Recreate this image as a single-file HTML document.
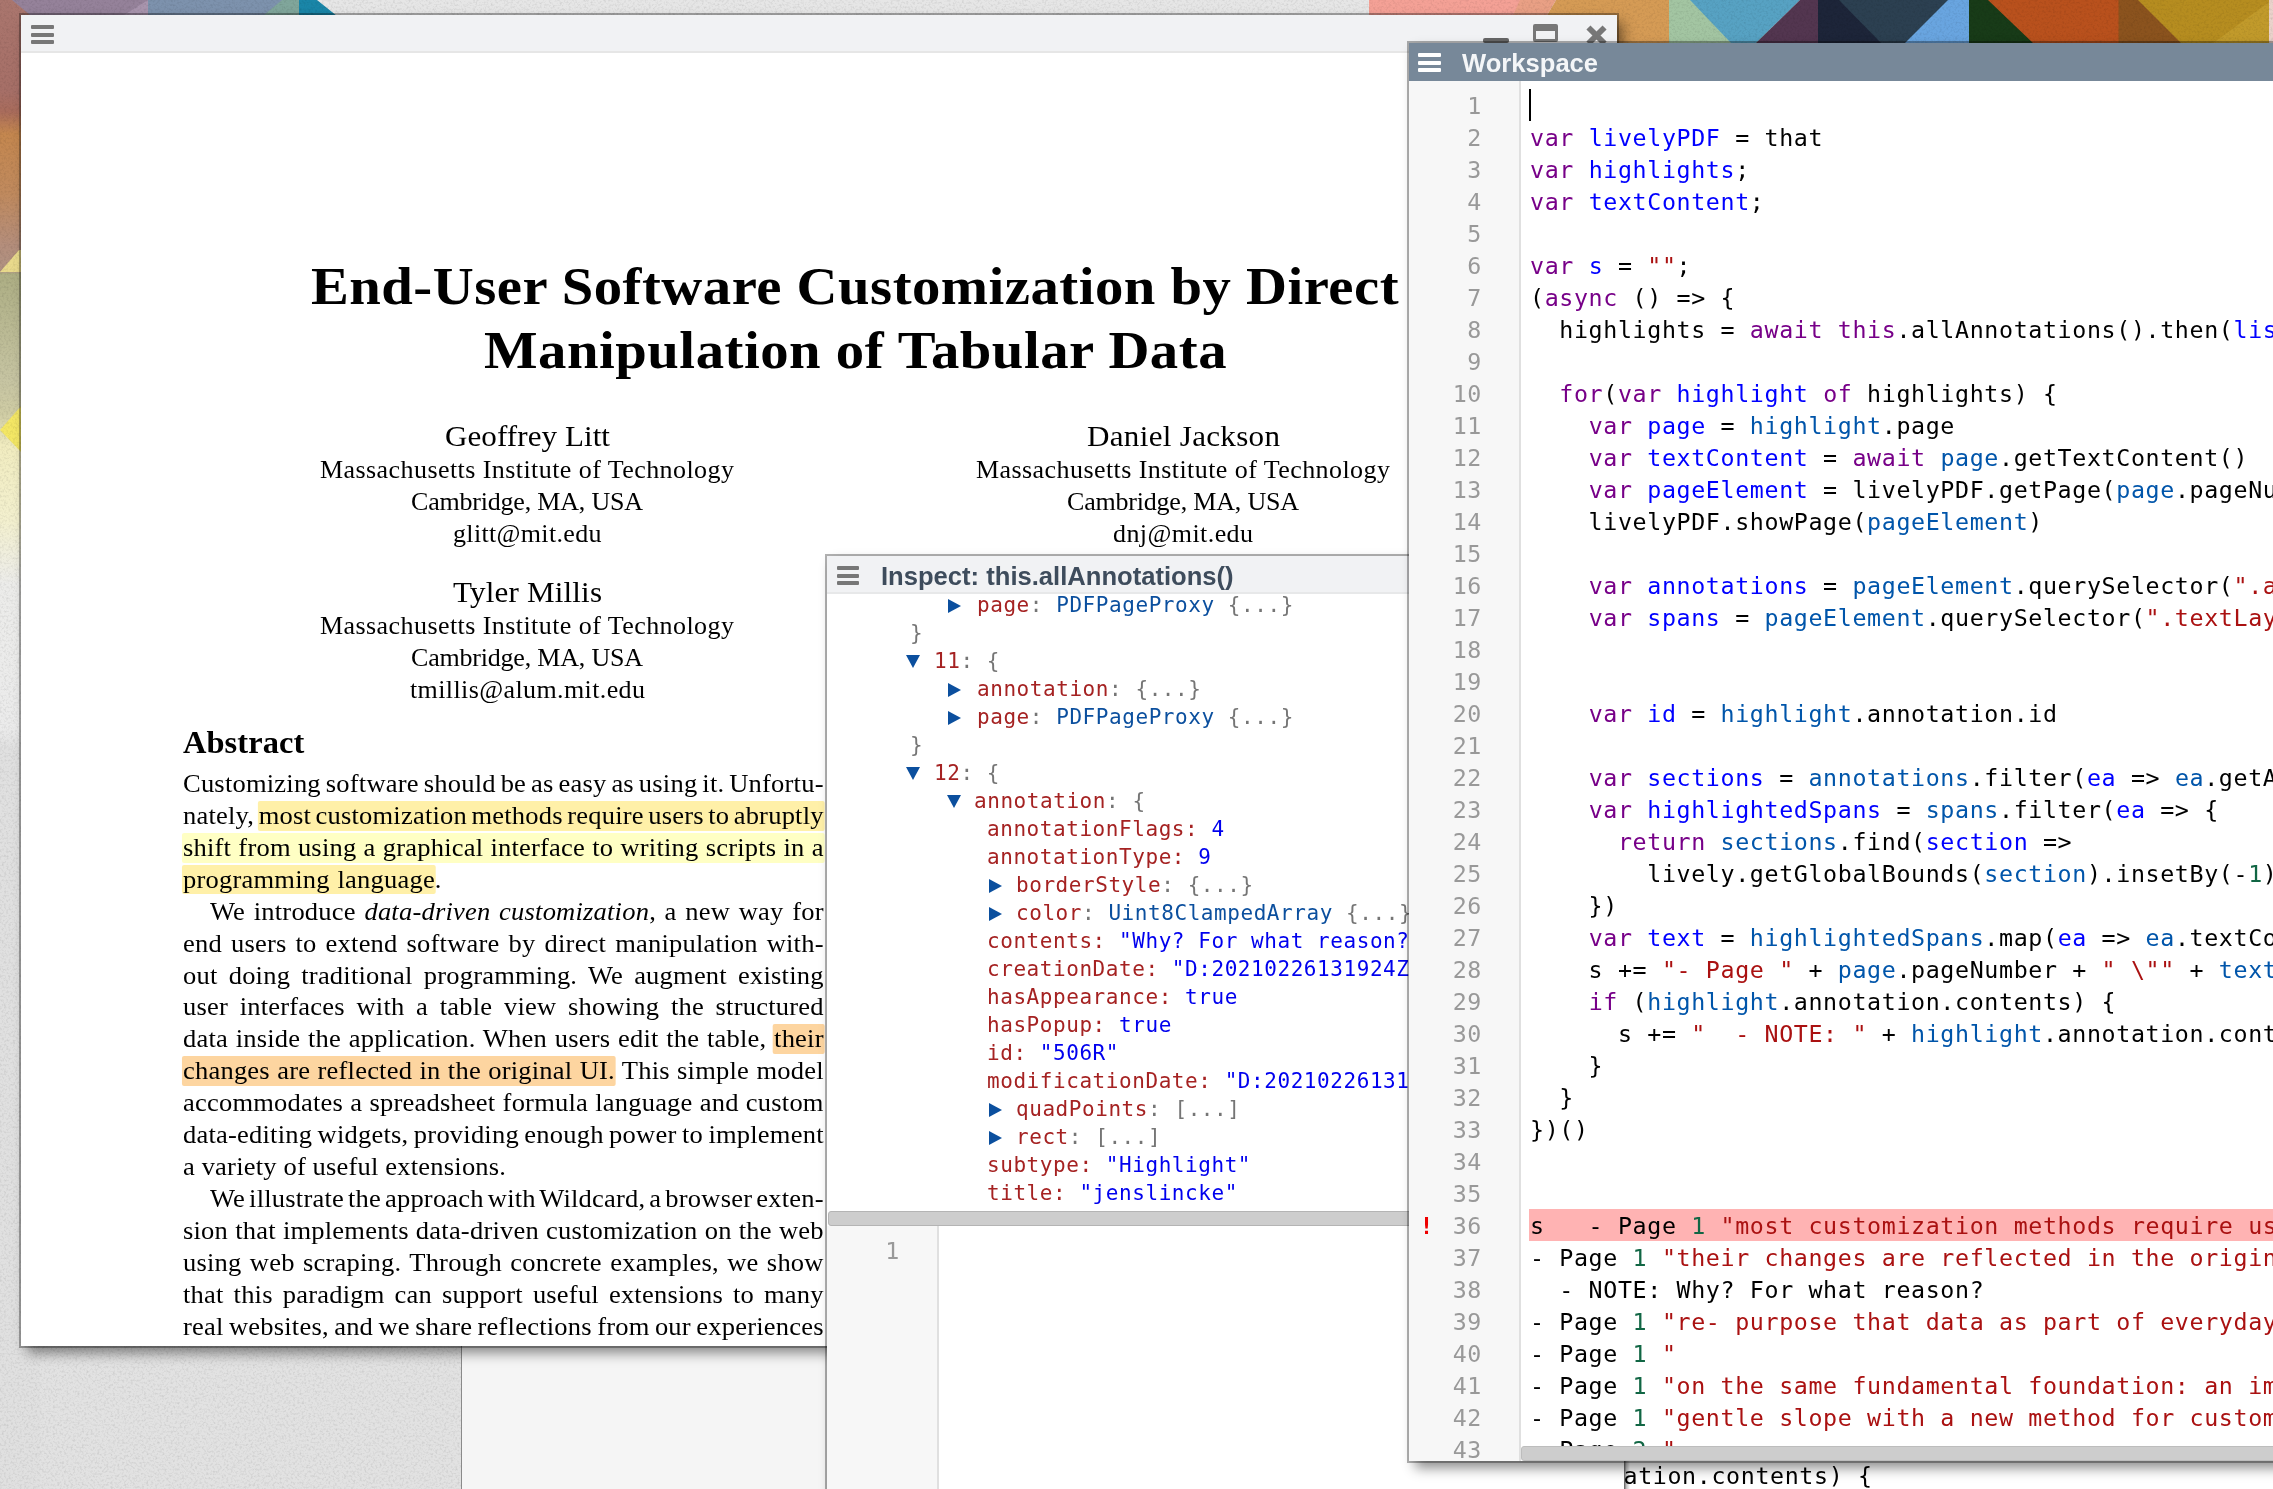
<!DOCTYPE html><html><head><meta charset="utf-8"><title>Lively PDF annotations</title><style>
html,body{margin:0;padding:0}
body{width:2273px;height:1489px;overflow:hidden;position:relative;background:#e1e1e1;font-family:"Liberation Sans",sans-serif}
#bg{position:absolute;left:0;top:0}
.win{position:absolute;overflow:hidden;background:#fff;will-change:transform;box-shadow:0 0 0 2px rgba(0,0,0,.31),6px 7px 12px 0 rgba(0,0,0,.45)}
.wrap{position:absolute}
.shadow{position:absolute;box-shadow:0 0 0 2px rgba(0,0,0,.31),6px 7px 12px 0 rgba(0,0,0,.45)}
.pdf{left:21px;top:15px;width:1596px;height:1331px}
.insp{left:827px;top:556px;width:1500px;height:960px}
.ws{left:1409px;top:43px;width:900px;height:1418px}
.tbar{position:absolute;left:0;top:0;right:0}
.tbar.light{background:#f1f2f4}
.pdf .tbar{height:36px;border-bottom:2px solid #e6e6e6}
.insp .tbar{height:35.6px;border-bottom:2px solid #e7e8e9}
.ws .tbar{height:38px;background:#778899}
.burger{position:absolute;width:23px}
.burger i{position:absolute;left:0;width:100%;height:3.7px;border-radius:1px;background:#777}
.pdf .burger{left:10px;top:10.4px;width:22.5px}
.pdf .burger i:nth-child(1){top:0}.pdf .burger i:nth-child(2){top:7.5px}.pdf .burger i:nth-child(3){top:15px}
.insp .burger{left:9.7px;top:10.2px;width:22.3px}
.insp .burger i{height:3.8px}.insp .burger i:nth-child(1){top:0}.insp .burger i:nth-child(2){top:7.8px}.insp .burger i:nth-child(3){top:15px}
.ws .burger{left:9.3px;top:10.2px;width:23.2px}
.ws .burger i{background:#fff;height:4px}
.ws .burger i:nth-child(1){top:0}.ws .burger i:nth-child(2){top:7.4px}.ws .burger i:nth-child(3){top:14.8px}
.ttl{position:absolute;font-weight:bold;white-space:nowrap}
.ttl.white{color:#f4f6f8;left:53px;top:4.5px;font-size:25.6px;line-height:30px}
.ttl.dark{color:#3e4c5c;left:54px;top:4.5px;font-size:25.6px;line-height:30px}
.wctl{position:absolute;left:0;top:0}
.wctl .min{position:absolute;left:1462px;top:23px;width:25.5px;height:5px;background:#666;border-radius:2px}
.wctl .max{position:absolute;left:1512px;top:8.7px;width:19px;height:8.1px;border:3.5px solid #777;border-top-width:7.4px;border-radius:2px}
.wctl .cls{position:absolute;left:1563.5px;top:8.5px;width:23px;height:23px}
.paper{position:absolute;left:-21px;top:-15px;width:2273px;height:1489px;font-family:"Liberation Serif",serif;color:#000}
.t{position:absolute;white-space:pre}
.bl .i{font-style:italic}
.bl .y,.bl .z,.bl .o{padding:0 1px .7px 1.1px;margin:0 -1px 0 -1.1px;border-radius:2px}
.bl .y{background:#fff0a8}.bl .z{background:#ffffc4}.bl .o{background:#fdd5a0}
.tree{position:absolute;left:-827px;top:-556px;font-family:"DejaVu Sans Mono","Liberation Mono",monospace;font-size:21px;letter-spacing:.56px}
.tr{position:absolute;left:0;height:28px;line-height:28px;white-space:pre}
.tt{position:absolute;top:0}
.ar{position:absolute;width:0;height:0}
.ar.r{top:7.5px;border-left:13px solid #0b4f9e;border-top:7.3px solid transparent;border-bottom:7.3px solid transparent}
.ar.d{top:8px;border-top:13px solid #0b4f9e;border-left:7.3px solid transparent;border-right:7.3px solid transparent}
.p{color:#a52222}.g{color:#757575}.c{color:#0b4f9e}.b{color:#0000ee}
.hsb{position:absolute;left:1px;top:654.5px;width:1600px;height:13px;background:#cdcdcd;border:1.2px solid #b4b4b4;border-radius:3px}
.ed2{position:absolute;left:0;top:669.5px;width:1600px;height:400px;background:#fff}
.gut{position:absolute;left:0;top:0;bottom:0;width:110px;background:#f7f7f7;border-right:2px solid #e0e0e0}
.ed{position:absolute;left:0;top:38px;right:0;bottom:0;background:#fff}
.ln,.cl,.bang{position:absolute;height:32px;line-height:32px;font-family:"DejaVu Sans Mono","Liberation Mono",monospace;font-size:23.3px;letter-spacing:.63px;white-space:pre}
.ln{left:0;width:73px;text-align:right;color:#999}
.cl{left:121px;color:#000}
.errbg{position:absolute;left:119.6px;top:1128px;width:900px;height:32px;background:#ffb3b3}
.bang{left:10.5px;color:#e00;font-weight:bold}
.k{color:#770088}.d{color:#0000ff}.v{color:#0055aa}.s{color:#aa1111}.n{color:#116644}
.cur{position:absolute;left:119.5px;top:8px;width:2px;height:32px;background:#000}
.hsb2{position:absolute;left:112px;top:1364.5px;width:900px;height:13px;background:#cdcdcd;border:1.2px solid #bdbdbd;border-radius:3px}
.backwin{position:absolute;left:461px;top:1300px;width:400px;height:200px;background:#f5f5f5;border-left:1.5px solid #8a8a8a}
.backcode{position:absolute;left:1623.5px;top:1459.7px;width:700px;height:32px;line-height:32px;font-family:"DejaVu Sans Mono","Liberation Mono",monospace;font-size:23.3px;letter-spacing:.63px;color:#000;white-space:pre}
.backcode .bsel{position:absolute;left:0;top:0;width:6px;height:40px;background:linear-gradient(90deg,rgba(0,0,0,.65),rgba(0,0,0,.25) 40%,rgba(0,0,0,0))}

</style></head><body>
<svg id="bg" width="2273" height="1489" viewBox="0 0 2273 1489">
<defs>
<linearGradient id="lg" x1="0" y1="0" x2="0" y2="1489" gradientUnits="userSpaceOnUse">
<stop offset="0" stop-color="#aa766e"/><stop offset="0.062" stop-color="#a66f67"/><stop offset="0.075" stop-color="#a96c5c"/>
<stop offset="0.09" stop-color="#c4874f"/><stop offset="0.13" stop-color="#c08a5e"/><stop offset="0.165" stop-color="#b48e7c"/>
<stop offset="0.182" stop-color="#b09282"/><stop offset="0.184" stop-color="#adae84"/><stop offset="0.255" stop-color="#c6c4a2"/>
<stop offset="0.278" stop-color="#cfcca4"/><stop offset="0.30" stop-color="#f1ecc0"/><stop offset="0.35" stop-color="#f3f0cf"/>
<stop offset="0.392" stop-color="#ececea"/><stop offset="0.489" stop-color="#ebebeb"/><stop offset="0.502" stop-color="#e0e0e0"/><stop offset="1" stop-color="#e0e0e0"/>
</linearGradient>
<filter id="nz" x="0" y="0" width="100%" height="100%"><feTurbulence type="fractalNoise" baseFrequency="0.45" numOctaves="2" seed="7" result="t"/><feColorMatrix type="matrix" values="0 0 0 0 0  0 0 0 0 0  0 0 0 0 0  1.3 0 0 0 -0.58"/></filter>
</defs>
<rect width="2273" height="1489" fill="#e2e2e2"/>
<rect x="20" y="0" width="1360" height="20" fill="#e6e6e6"/>
<rect x="0" y="0" width="40" height="1489" fill="url(#lg)"/>
<polygon points="0,272 19,250 24,250 24,272" fill="#e9da8c"/>
<polygon points="0,430 22,405 22,453" fill="#f4e765"/>
<polygon points="12,0 148,0 148,20 36,20" fill="#95829a"/>
<polygon points="148,0 148,20 116,20" fill="#a995ae"/>
<rect x="148" y="0" width="152" height="20" fill="#7d92ad"/>
<polygon points="299,0 299,20 258,20 282,0" fill="#80a69b"/>
<polygon points="299,0 317,0 342,20 299,20" fill="#1a86a8"/>
<rect x="1369" y="0" width="160" height="44" fill="#f4a196"/>
<polygon points="1556,0 1700,0 1700,44 1530,44" fill="#d59b55"/>
<polygon points="1520,0 1556,0 1530,44 1500,44" fill="#e9a085"/>
<rect x="1669" y="0" width="100" height="44" fill="#a3c5a2"/>
<polygon points="1690,0 1800,0 1756,43 1731,43" fill="#57a2c3"/>
<polygon points="1800,0 1818,0 1818,44 1755,44" fill="#533650"/>
<rect x="1818" y="0" width="90" height="44" fill="#1d2539"/>
<polygon points="1839,0 1950,0 1905,44 1882,44" fill="#2c4051"/>
<polygon points="1948,0 1969,0 1969,44 1904,44" fill="#69a5e0"/>
<rect x="1969" y="0" width="70" height="44" fill="#183b18"/>
<polygon points="1988,0 2119,0 2119,44 2034,44" fill="#b9511d"/>
<rect x="2118.5" y="0" width="70" height="44" fill="#8b531e"/>
<polygon points="2138,0 2269,0 2269,44 2182,44" fill="#b68d20"/>
<polygon points="2269,2 2269,44 2212,44" fill="#c19a2b"/>
<rect x="2269" y="0" width="4" height="44" fill="#ead2cb"/>
<rect width="2273" height="1489" filter="url(#nz)" fill="#000" opacity="0.16"/>
</svg>

<div class="backwin"></div>
<div class="win pdf"><div class="tbar light"><div class="burger g"><i></i><i></i><i></i></div>
<div class="wctl"><span class="min"></span><span class="max"></span><svg class="cls" viewBox="0 0 20 20"><path d="M3 3 L17 17 M17 3 L3 17" stroke="#777" stroke-width="5" fill="none"/></svg></div></div>
<div class="paper">
<div class="t " style="left:311.40px;top:252.81px;font-size:53px;line-height:66px;letter-spacing:0.458px;font-weight:bold;transform:scaleX(1.07);transform-origin:0 0">End-User Software Customization by Direct</div>
<div class="t " style="left:484.00px;top:317.11px;font-size:53px;line-height:66px;letter-spacing:0.484px;font-weight:bold;transform:scaleX(1.07);transform-origin:0 0">Manipulation of Tabular Data</div>
<div class="t " style="left:444.70px;top:416.77px;font-size:30.3px;line-height:38px;letter-spacing:0.071px;transform:scaleX(1.025);transform-origin:0 0">Geoffrey Litt</div>
<div class="t " style="left:320.20px;top:453.91px;font-size:25px;line-height:31px;letter-spacing:0.414px;transform:scaleX(1.04);transform-origin:0 0">Massachusetts Institute of Technology</div>
<div class="t " style="left:411.20px;top:485.76px;font-size:25px;line-height:31px;letter-spacing:-0.195px;transform:scaleX(1.04);transform-origin:0 0">Cambridge, MA, USA</div>
<div class="t " style="left:452.95px;top:517.61px;font-size:25px;line-height:31px;letter-spacing:0.316px;transform:scaleX(1.04);transform-origin:0 0">glitt@mit.edu</div>
<div class="t " style="left:1086.70px;top:416.77px;font-size:30.3px;line-height:38px;letter-spacing:0.310px;transform:scaleX(1.025);transform-origin:0 0">Daniel Jackson</div>
<div class="t " style="left:976.20px;top:453.91px;font-size:25px;line-height:31px;letter-spacing:0.414px;transform:scaleX(1.04);transform-origin:0 0">Massachusetts Institute of Technology</div>
<div class="t " style="left:1067.20px;top:485.76px;font-size:25px;line-height:31px;letter-spacing:-0.195px;transform:scaleX(1.04);transform-origin:0 0">Cambridge, MA, USA</div>
<div class="t " style="left:1113.20px;top:517.61px;font-size:25px;line-height:31px;letter-spacing:0.396px;transform:scaleX(1.04);transform-origin:0 0">dnj@mit.edu</div>
<div class="t " style="left:452.70px;top:572.77px;font-size:30.3px;line-height:38px;letter-spacing:0.172px;transform:scaleX(1.025);transform-origin:0 0">Tyler Millis</div>
<div class="t " style="left:320.20px;top:609.91px;font-size:25px;line-height:31px;letter-spacing:0.414px;transform:scaleX(1.04);transform-origin:0 0">Massachusetts Institute of Technology</div>
<div class="t " style="left:411.20px;top:641.76px;font-size:25px;line-height:31px;letter-spacing:-0.195px;transform:scaleX(1.04);transform-origin:0 0">Cambridge, MA, USA</div>
<div class="t " style="left:409.70px;top:673.61px;font-size:25px;line-height:31px;letter-spacing:0.374px;transform:scaleX(1.04);transform-origin:0 0">tmillis@alum.mit.edu</div>
<div class="t " style="left:183.20px;top:723.07px;font-size:31.5px;line-height:39px;letter-spacing:0.064px;font-weight:bold;transform:scaleX(1.03);transform-origin:0 0">Abstract</div>
<div class="t bl" style="left:183.20px;top:767.99px;font-size:25.5px;line-height:32px;letter-spacing:0.200px;word-spacing:-1.816px;transform:scaleX(1.04);transform-origin:0 0">Customizing software should be as easy as using it. Unfortu-</div>
<div class="t bl" style="left:183.20px;top:799.91px;font-size:25.5px;line-height:32px;letter-spacing:0.200px;word-spacing:-2.296px;transform:scaleX(1.04);transform-origin:0 0">nately, <span class="y">most customization methods require users to abruptly</span></div>
<div class="t bl" style="left:183.20px;top:831.83px;font-size:25.5px;line-height:32px;letter-spacing:0.200px;word-spacing:0.317px;transform:scaleX(1.04);transform-origin:0 0"><span class="z">shift from using a graphical interface to writing scripts in a</span></div>
<div class="t bl" style="left:183.20px;top:863.75px;font-size:25.5px;line-height:32px;letter-spacing:0.200px;word-spacing:0.948px;transform:scaleX(1.04);transform-origin:0 0"><span class="y">programming language</span>.</div>
<div class="t bl" style="left:210.20px;top:895.67px;font-size:25.5px;line-height:32px;letter-spacing:0.200px;word-spacing:1.739px;transform:scaleX(1.04);transform-origin:0 0">We introduce <span class="i">data-driven customization</span>, a new way for</div>
<div class="t bl" style="left:183.20px;top:927.59px;font-size:25.5px;line-height:32px;letter-spacing:0.200px;word-spacing:2.112px;transform:scaleX(1.04);transform-origin:0 0">end users to extend software by direct manipulation with-</div>
<div class="t bl" style="left:183.20px;top:959.51px;font-size:25.5px;line-height:32px;letter-spacing:0.200px;word-spacing:4.154px;transform:scaleX(1.04);transform-origin:0 0">out doing traditional programming. We augment existing</div>
<div class="t bl" style="left:183.20px;top:991.43px;font-size:25.5px;line-height:32px;letter-spacing:0.200px;word-spacing:4.620px;transform:scaleX(1.04);transform-origin:0 0">user interfaces with a table view showing the structured</div>
<div class="t bl" style="left:183.20px;top:1023.35px;font-size:25.5px;line-height:32px;letter-spacing:0.200px;word-spacing:0.822px;transform:scaleX(1.04);transform-origin:0 0">data inside the application. When users edit the table, <span class="o">their</span></div>
<div class="t bl" style="left:183.20px;top:1055.27px;font-size:25.5px;line-height:32px;letter-spacing:0.200px;word-spacing:0.474px;transform:scaleX(1.04);transform-origin:0 0"><span class="o">changes are reflected in the original UI.</span> This simple model</div>
<div class="t bl" style="left:183.20px;top:1087.19px;font-size:25.5px;line-height:32px;letter-spacing:0.200px;word-spacing:0.331px;transform:scaleX(1.04);transform-origin:0 0">accommodates a spreadsheet formula language and custom</div>
<div class="t bl" style="left:183.20px;top:1119.11px;font-size:25.5px;line-height:32px;letter-spacing:0.200px;word-spacing:-1.321px;transform:scaleX(1.04);transform-origin:0 0">data-editing widgets, providing enough power to implement</div>
<div class="t bl" style="left:183.20px;top:1151.03px;font-size:25.5px;line-height:32px;letter-spacing:0.200px;word-spacing:-0.157px;transform:scaleX(1.04);transform-origin:0 0">a variety of useful extensions.</div>
<div class="t bl" style="left:210.20px;top:1182.95px;font-size:25.5px;line-height:32px;letter-spacing:0.200px;word-spacing:-2.742px;transform:scaleX(1.04);transform-origin:0 0">We illustrate the approach with Wildcard, a browser exten-</div>
<div class="t bl" style="left:183.20px;top:1214.87px;font-size:25.5px;line-height:32px;letter-spacing:0.200px;word-spacing:0.287px;transform:scaleX(1.04);transform-origin:0 0">sion that implements data-driven customization on the web</div>
<div class="t bl" style="left:183.20px;top:1246.79px;font-size:25.5px;line-height:32px;letter-spacing:0.200px;word-spacing:1.453px;transform:scaleX(1.04);transform-origin:0 0">using web scraping. Through concrete examples, we show</div>
<div class="t bl" style="left:183.20px;top:1278.71px;font-size:25.5px;line-height:32px;letter-spacing:0.200px;word-spacing:3.016px;transform:scaleX(1.04);transform-origin:0 0">that this paradigm can support useful extensions to many</div>
<div class="t bl" style="left:183.20px;top:1310.63px;font-size:25.5px;line-height:32px;letter-spacing:0.200px;word-spacing:-1.402px;transform:scaleX(1.04);transform-origin:0 0">real websites, and we share reflections from our experiences</div>
</div></div>
<div class="win insp"><div class="tbar light"><div class="burger g"><i></i><i></i><i></i></div><div class="ttl dark">Inspect: this.allAnnotations()</div></div>
<div class="tree">
<div class="tr" style="top:591px"><span class="ar r" style="left:948px"></span><span class="tt" style="left:977px"><span class="p">page</span><span class="g">:</span> <span class="c">PDFPageProxy</span> <span class="g">{...}</span></span></div>
<div class="tr" style="top:619px"><span class="tt" style="left:910px"><span class="g">}</span></span></div>
<div class="tr" style="top:647px"><span class="ar d" style="left:906px"></span><span class="tt" style="left:934px"><span class="p">11</span><span class="g">:</span> <span class="g">{</span></span></div>
<div class="tr" style="top:675px"><span class="ar r" style="left:948px"></span><span class="tt" style="left:977px"><span class="p">annotation</span><span class="g">:</span> <span class="g">{...}</span></span></div>
<div class="tr" style="top:703px"><span class="ar r" style="left:948px"></span><span class="tt" style="left:977px"><span class="p">page</span><span class="g">:</span> <span class="c">PDFPageProxy</span> <span class="g">{...}</span></span></div>
<div class="tr" style="top:731px"><span class="tt" style="left:910px"><span class="g">}</span></span></div>
<div class="tr" style="top:759px"><span class="ar d" style="left:906px"></span><span class="tt" style="left:934px"><span class="p">12</span><span class="g">:</span> <span class="g">{</span></span></div>
<div class="tr" style="top:787px"><span class="ar d" style="left:947px"></span><span class="tt" style="left:974px"><span class="p">annotation</span><span class="g">:</span> <span class="g">{</span></span></div>
<div class="tr" style="top:815px"><span class="tt" style="left:987px"><span class="p">annotationFlags:</span> <span class="b">4</span></span></div>
<div class="tr" style="top:843px"><span class="tt" style="left:987px"><span class="p">annotationType:</span> <span class="b">9</span></span></div>
<div class="tr" style="top:871px"><span class="ar r" style="left:989px"></span><span class="tt" style="left:1016px"><span class="p">borderStyle</span><span class="g">:</span> <span class="g">{...}</span></span></div>
<div class="tr" style="top:899px"><span class="ar r" style="left:989px"></span><span class="tt" style="left:1016px"><span class="p">color</span><span class="g">:</span> <span class="c">Uint8ClampedArray</span> <span class="g">{...}</span></span></div>
<div class="tr" style="top:927px"><span class="tt" style="left:987px"><span class="p">contents:</span> <span class="b">"Why? For what reason?</span></span></div>
<div class="tr" style="top:955px"><span class="tt" style="left:987px"><span class="p">creationDate:</span> <span class="b">"D:20210226131924Z</span></span></div>
<div class="tr" style="top:983px"><span class="tt" style="left:987px"><span class="p">hasAppearance:</span> <span class="b">true</span></span></div>
<div class="tr" style="top:1011px"><span class="tt" style="left:987px"><span class="p">hasPopup:</span> <span class="b">true</span></span></div>
<div class="tr" style="top:1039px"><span class="tt" style="left:987px"><span class="p">id:</span> <span class="b">"506R"</span></span></div>
<div class="tr" style="top:1067px"><span class="tt" style="left:987px"><span class="p">modificationDate:</span> <span class="b">"D:20210226131</span></span></div>
<div class="tr" style="top:1095px"><span class="ar r" style="left:989px"></span><span class="tt" style="left:1016px"><span class="p">quadPoints</span><span class="g">:</span> <span class="g">[...]</span></span></div>
<div class="tr" style="top:1123px"><span class="ar r" style="left:989px"></span><span class="tt" style="left:1016px"><span class="p">rect</span><span class="g">:</span> <span class="g">[...]</span></span></div>
<div class="tr" style="top:1151px"><span class="tt" style="left:987px"><span class="p">subtype:</span> <span class="b">"Highlight"</span></span></div>
<div class="tr" style="top:1179px"><span class="tt" style="left:987px"><span class="p">title:</span> <span class="b">"jenslincke"</span></span></div>
</div><div class="hsb"></div><div class="ed2"><div class="gut"></div><div class="ln" style="top:9px;width:73px">1</div></div></div>
<div class="backcode"><span class="bsel"></span>ation.contents) {</div>
<div class="win ws"><div class="tbar slate"><div class="burger w"><i></i><i></i><i></i></div><div class="ttl white">Workspace</div></div>
<div class="ed"><div class="gut"></div>
<div class="ln" style="top:9px">1</div>
<div class="cl" style="top:9px"></div>
<div class="ln" style="top:41px">2</div>
<div class="cl" style="top:41px"><span class="k">var</span> <span class="d">livelyPDF</span> = that</div>
<div class="ln" style="top:73px">3</div>
<div class="cl" style="top:73px"><span class="k">var</span> <span class="d">highlights</span>;</div>
<div class="ln" style="top:105px">4</div>
<div class="cl" style="top:105px"><span class="k">var</span> <span class="d">textContent</span>;</div>
<div class="ln" style="top:137px">5</div>
<div class="cl" style="top:137px"></div>
<div class="ln" style="top:169px">6</div>
<div class="cl" style="top:169px"><span class="k">var</span> <span class="d">s</span> = <span class="s">""</span>;</div>
<div class="ln" style="top:201px">7</div>
<div class="cl" style="top:201px">(<span class="k">async</span> () =&gt; {</div>
<div class="ln" style="top:233px">8</div>
<div class="cl" style="top:233px">  highlights = <span class="k">await</span> <span class="k">this</span>.allAnnotations().then(<span class="d">lis</span></div>
<div class="ln" style="top:265px">9</div>
<div class="cl" style="top:265px"></div>
<div class="ln" style="top:297px">10</div>
<div class="cl" style="top:297px">  <span class="k">for</span>(<span class="k">var</span> <span class="d">highlight</span> <span class="k">of</span> highlights) {</div>
<div class="ln" style="top:329px">11</div>
<div class="cl" style="top:329px">    <span class="k">var</span> <span class="d">page</span> = <span class="v">highlight</span>.page</div>
<div class="ln" style="top:361px">12</div>
<div class="cl" style="top:361px">    <span class="k">var</span> <span class="d">textContent</span> = <span class="k">await</span> <span class="v">page</span>.getTextContent()</div>
<div class="ln" style="top:393px">13</div>
<div class="cl" style="top:393px">    <span class="k">var</span> <span class="d">pageElement</span> = livelyPDF.getPage(<span class="v">page</span>.pageNu</div>
<div class="ln" style="top:425px">14</div>
<div class="cl" style="top:425px">    livelyPDF.showPage(<span class="v">pageElement</span>)</div>
<div class="ln" style="top:457px">15</div>
<div class="cl" style="top:457px"></div>
<div class="ln" style="top:489px">16</div>
<div class="cl" style="top:489px">    <span class="k">var</span> <span class="d">annotations</span> = <span class="v">pageElement</span>.querySelector(<span class="s">".a</span></div>
<div class="ln" style="top:521px">17</div>
<div class="cl" style="top:521px">    <span class="k">var</span> <span class="d">spans</span> = <span class="v">pageElement</span>.querySelector(<span class="s">".textLay</span></div>
<div class="ln" style="top:553px">18</div>
<div class="cl" style="top:553px"></div>
<div class="ln" style="top:585px">19</div>
<div class="cl" style="top:585px"></div>
<div class="ln" style="top:617px">20</div>
<div class="cl" style="top:617px">    <span class="k">var</span> <span class="d">id</span> = <span class="v">highlight</span>.annotation.id</div>
<div class="ln" style="top:649px">21</div>
<div class="cl" style="top:649px"></div>
<div class="ln" style="top:681px">22</div>
<div class="cl" style="top:681px">    <span class="k">var</span> <span class="d">sections</span> = <span class="v">annotations</span>.filter(<span class="d">ea</span> =&gt; <span class="v">ea</span>.getA</div>
<div class="ln" style="top:713px">23</div>
<div class="cl" style="top:713px">    <span class="k">var</span> <span class="d">highlightedSpans</span> = <span class="v">spans</span>.filter(<span class="d">ea</span> =&gt; {</div>
<div class="ln" style="top:745px">24</div>
<div class="cl" style="top:745px">      <span class="k">return</span> <span class="v">sections</span>.find(<span class="d">section</span> =&gt;</div>
<div class="ln" style="top:777px">25</div>
<div class="cl" style="top:777px">        lively.getGlobalBounds(<span class="v">section</span>).insetBy(-<span class="n">1</span>)</div>
<div class="ln" style="top:809px">26</div>
<div class="cl" style="top:809px">    })</div>
<div class="ln" style="top:841px">27</div>
<div class="cl" style="top:841px">    <span class="k">var</span> <span class="d">text</span> = <span class="v">highlightedSpans</span>.map(<span class="d">ea</span> =&gt; <span class="v">ea</span>.textCo</div>
<div class="ln" style="top:873px">28</div>
<div class="cl" style="top:873px">    s += <span class="s">"- Page "</span> + <span class="v">page</span>.pageNumber + <span class="s">" \""</span> + <span class="v">text</span></div>
<div class="ln" style="top:905px">29</div>
<div class="cl" style="top:905px">    <span class="k">if</span> (<span class="v">highlight</span>.annotation.contents) {</div>
<div class="ln" style="top:937px">30</div>
<div class="cl" style="top:937px">      s += <span class="s">"  - NOTE: "</span> + <span class="v">highlight</span>.annotation.cont</div>
<div class="ln" style="top:969px">31</div>
<div class="cl" style="top:969px">    }</div>
<div class="ln" style="top:1001px">32</div>
<div class="cl" style="top:1001px">  }</div>
<div class="ln" style="top:1033px">33</div>
<div class="cl" style="top:1033px">})()</div>
<div class="ln" style="top:1065px">34</div>
<div class="cl" style="top:1065px"></div>
<div class="ln" style="top:1097px">35</div>
<div class="cl" style="top:1097px"></div>
<div class="errbg"></div><div class="bang" style="top:1129px">!</div>
<div class="ln" style="top:1129px">36</div>
<div class="cl err" style="top:1129px">s   - Page <span class="n">1</span> <span class="s">"most customization methods require us</span></div>
<div class="ln" style="top:1161px">37</div>
<div class="cl" style="top:1161px">- Page <span class="n">1</span> <span class="s">"their changes are reflected in the origin</span></div>
<div class="ln" style="top:1193px">38</div>
<div class="cl" style="top:1193px">  - NOTE: Why? For what reason?</div>
<div class="ln" style="top:1225px">39</div>
<div class="cl" style="top:1225px">- Page <span class="n">1</span> <span class="s">"re- purpose that data as part of everyday</span></div>
<div class="ln" style="top:1257px">40</div>
<div class="cl" style="top:1257px">- Page <span class="n">1</span> <span class="s">"</span></div>
<div class="ln" style="top:1289px">41</div>
<div class="cl" style="top:1289px">- Page <span class="n">1</span> <span class="s">"on the same fundamental foundation: an im</span></div>
<div class="ln" style="top:1321px">42</div>
<div class="cl" style="top:1321px">- Page <span class="n">1</span> <span class="s">"gentle slope with a new method for custom</span></div>
<div class="ln" style="top:1353px">43</div>
<div class="cl" style="top:1353px">- Page <span class="n">2</span> <span class="s">"</span></div>
<div class="cur"></div><div class="hsb2"></div></div></div>
</body></html>
